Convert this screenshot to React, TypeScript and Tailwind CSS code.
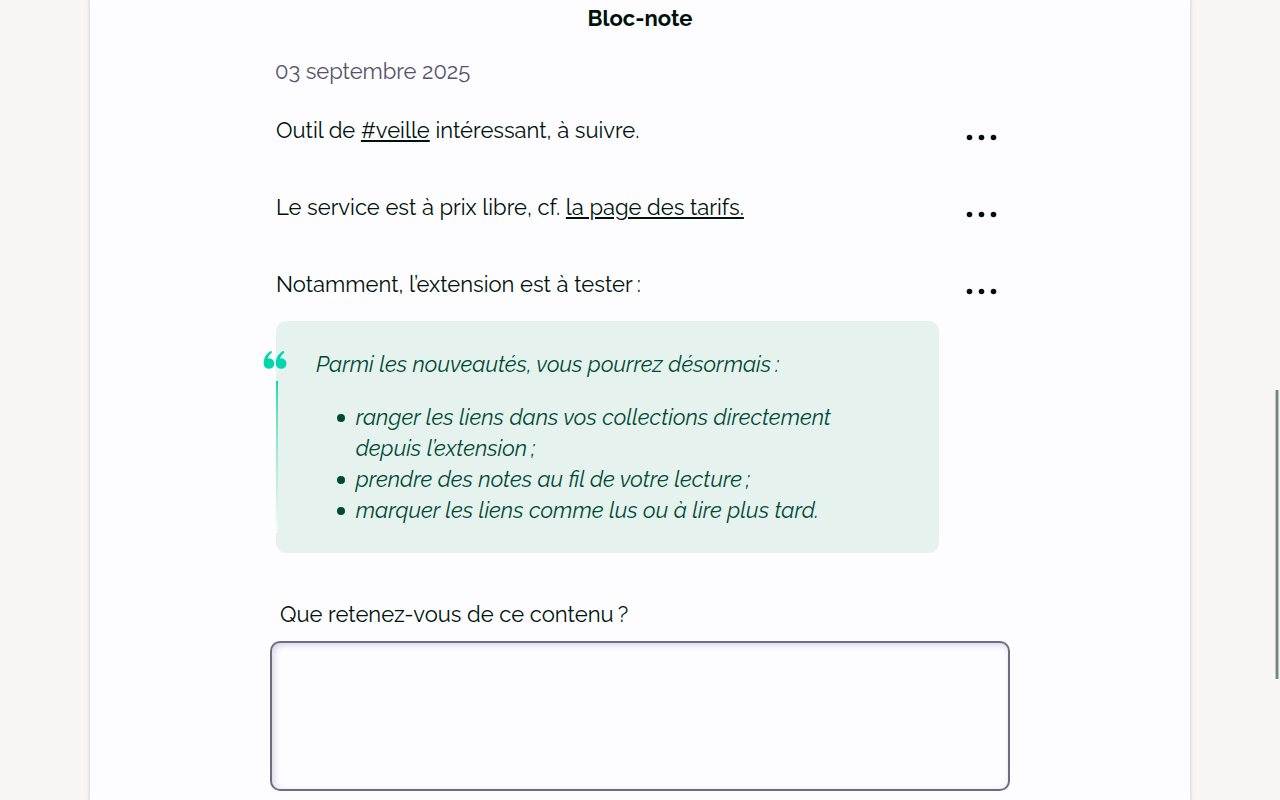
import React from "react";

function Dots() {
  return (
    <button aria-label="Actions" className="mt-[18px] mr-[4px] h-2 w-8 shrink-0">
      <svg width="32" height="8" viewBox="0 0 32 8" className="block" fill="#00120b">
        <circle cx="3.5" cy="4.5" r="2.8" />
        <circle cx="15.5" cy="4.5" r="2.8" />
        <circle cx="27.5" cy="4.5" r="2.8" />
      </svg>
    </button>
  );
}

function NarrowSpace() {
  return <span className="tracking-[1.3px]">{"\u202f"}</span>;
}

function Note({ children }: { children: React.ReactNode }) {
  return (
    <div className="flex h-[77px] items-start justify-between pl-[6px] pr-[8px]">
      <p className="whitespace-nowrap">{children}</p>
      <Dots />
    </div>
  );
}

function Item({ children }: { children: React.ReactNode }) {
  return (
    <li className="flex">
      <span className="mt-[12px] ml-[20.5px] mr-[11.2px] size-[8px] shrink-0 rounded-full bg-[#004934]" />
      <span>{children}</span>
    </li>
  );
}

export default function App() {
  return (
    <div className="relative flex h-[800px] w-[1280px] justify-center overflow-hidden bg-[#f7f6f4] font-['Raleway','Lato',sans-serif] text-[22px] leading-[31px] text-[#00120b]">
      <main className="h-[800px] w-[1100px] bg-[#fdfdff] px-[180px] pt-[3px] shadow-[0_0_3px_1px_#d3d2df]">
        <h2 className="text-center font-bold">Bloc-note</h2>
        <p className="mt-[22px] pl-[5px] tracking-[-0.04px] text-[#57526a]">03 septembre 2025</p>
        <div className="mt-[28px]">
          <Note>
            Outil de <a className="underline decoration-2 underline-offset-[2px]">#veille</a> intéressant, à suivre.
          </Note>
          <Note>
            Le service est à prix libre, cf.{" "}
            <a className="underline decoration-2 underline-offset-[2px]">la page des tarifs.</a>
          </Note>
          <div className="-mb-[25px]">
            <Note>Notamment, l’extension est à tester<NarrowSpace />:</Note>
          </div>
        </div>
        <blockquote className="relative ml-[6px] h-[232px] w-[663px] rounded-[10px] bg-[#e5f2ee] pt-[28px] pl-[40px] text-[#004934] italic">
          <svg width="24" height="20" viewBox="0 0 24 20" className="absolute top-[29px] -left-[13px]" fill="#00d7ad">
            <circle cx="6" cy="13.5" r="5.3" />
            <path d="M.7 13.4C.7 7.5 3.4 3.7 7.2 1.2 8.6.6 9.4 2 8.5 2.9 6.1 5 4.8 6.8 4.5 10z" />
            <circle cx="18.1" cy="13.5" r="5.3" />
            <path d="M12.8 13.4c0-5.9 2.9-9.7 6.7-12.2 1.4-.6 2.4.8 1.5 1.7-2.4 2.1-3.9 3.9-4.2 7.1z" />
          </svg>
          <div className="absolute top-[60px] left-0 h-[152px] w-[2px] bg-gradient-to-b from-[#00d7ad] to-[#f5fbf9]" />
          <p className="whitespace-nowrap">Parmi les nouveautés, vous pourrez désormais<NarrowSpace />:</p>
          <ul className="mt-[22px] whitespace-nowrap">
            <Item>
              ranger les liens dans vos collections directement
              <br />
              depuis l’extension<NarrowSpace />;
            </Item>
            <Item>prendre des notes au fil de votre lecture<NarrowSpace />;</Item>
            <Item>marquer les liens comme lus ou à lire plus tard.</Item>
          </ul>
        </blockquote>
        <label htmlFor="note" className="mt-[46px] block pl-[10px]">Que retenez-vous de ce contenu<NarrowSpace />?</label>
        <textarea id="note" className="mt-[11px] block h-[150px] w-[740px] resize-none rounded-[10px] border-2 border-[#706b84] bg-[#fdfdff] shadow-[inset_2px_2px_6px_#d3d1e4] outline-none" />
      </main>
      <div className="absolute top-[390px] right-[1px] h-[289px] w-[4px] rounded-[1px] border-x border-[#bdc3bf] bg-[#7b837e]" />
    </div>
  );
}
